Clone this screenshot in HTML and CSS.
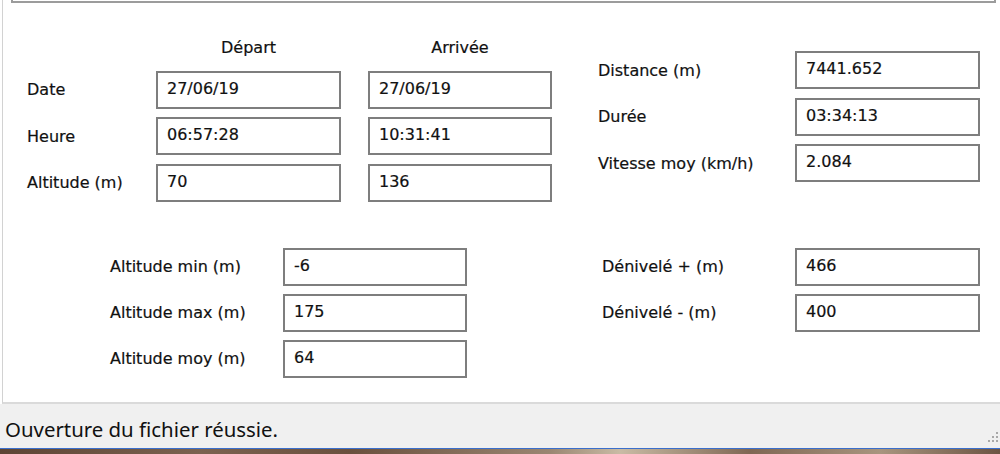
FILE: index.html
```
<!DOCTYPE html>
<html>
<head>
<title>Statistiques du parcours</title>
<meta charset="UTF-8" />
<link rel="stylesheet" href="styles.css">
</head>
<body>
<div class="window">
	<div class="panel">
		<div class="frame-top"></div>
		<div class="upper">
			<div class="times">
				<span></span>
				<h2>Départ</h2>
				<h2>Arrivée</h2>
				<label>Date</label>
				<div class="field">27/06/19</div>
				<div class="field">27/06/19</div>
				<label>Heure</label>
				<div class="field">06:57:28</div>
				<div class="field">10:31:41</div>
				<label>Altitude (m)</label>
				<div class="field">70</div>
				<div class="field">136</div>
			</div>
			<div class="totals">
				<label>Distance (m)</label>
				<div class="field">7441.652</div>
				<label>Durée</label>
				<div class="field">03:34:13</div>
				<label>Vitesse moy (km/h)</label>
				<div class="field">2.084</div>
			</div>
		</div>
		<div class="lower">
			<div class="altis">
				<label>Altitude min (m)</label>
				<div class="field">-6</div>
				<label>Altitude max (m)</label>
				<div class="field">175</div>
				<label>Altitude moy (m)</label>
				<div class="field">64</div>
			</div>
			<div class="climbs">
				<label>Dénivelé + (m)</label>
				<div class="field">466</div>
				<label>Dénivelé - (m)</label>
				<div class="field">400</div>
			</div>
		</div>
	</div>
	<div class="status">
		<span>Ouverture du fichier réussie.</span>
		<svg class="grip" width="12" height="12" viewBox="0 0 12 12">
			<rect x="9" y="1" width="2" height="2" fill="#a8a8a8"/>
			<rect x="5" y="5" width="2" height="2" fill="#a8a8a8"/>
			<rect x="9" y="5" width="2" height="2" fill="#a8a8a8"/>
			<rect x="1" y="9" width="2" height="2" fill="#a8a8a8"/>
			<rect x="5" y="9" width="2" height="2" fill="#a8a8a8"/>
			<rect x="9" y="9" width="2" height="2" fill="#a8a8a8"/>
		</svg>
	</div>
	<div class="desktop"></div>
</div>
</body>
</html>
```
FILE: styles.css
```
body{
	margin: 0 ;
	padding: 0 ;
	overflow: hidden ;
	background: #6e5846 ;
}
.window{
	width: 1000px ;
	height: 454px ;
	background: #fff ;
	font-family: "DejaVu Sans", Verdana, sans-serif ;
	font-size: 16px ;
	color: #111 ;
	-webkit-text-stroke: 0.2px ;
}
.panel{
	height: 402px ;
	margin-left: 2px ;
	border-left: 1px solid #d2d2d2 ;
	border-bottom: 2px solid #dadada ;
	background: #fff ;
}
.frame-top{
	height: 1px ;
	margin: 0 4px 0 8px ;
	border: 2px solid #9c9c9c ;
	border-top: none ;
}
.upper, .lower{
	display: flex ;
	align-items: flex-start ;
}
.times{
	display: grid ;
	grid-template-columns: 102px 185px 184px ;
	grid-template-rows: 34px 38px 38px 38px ;
	column-gap: 27px ;
	row-gap: 8.5px ;
	margin: 25px 0 0 24px ;
}
.times h2{
	margin: 0 ;
	padding-top: 4px ;
	font-size: 16px ;
	font-weight: normal ;
	text-align: center ;
	align-self: center ;
}
.totals{
	display: grid ;
	grid-template-columns: 197px 185px ;
	grid-auto-rows: 38px ;
	row-gap: 8.5px ;
	margin: 48px 0 0 46px ;
}
.lower{
	margin-top: 46px ;
}
.altis{
	display: grid ;
	grid-template-columns: 173px 184px ;
	grid-auto-rows: 38px ;
	row-gap: 8px ;
	margin-left: 107px ;
}
.climbs{
	display: grid ;
	grid-template-columns: 193px 185px ;
	grid-auto-rows: 38px ;
	row-gap: 8px ;
	margin-left: 135px ;
}
label{
	align-self: center ;
}
.field{
	box-sizing: border-box ;
	height: 38px ;
	padding: 6px 9px 0 ;
	border: 2px solid #7e7e7e ;
	background: #fff ;
	color: #111 ;
}
.status{
	position: relative ;
	box-sizing: border-box ;
	height: 45px ;
	padding: 11px 0 0 5px ;
	background: #f0f0f0 ;
	border-bottom: 1px solid #3b6fcc ;
	font-family: "Noto Sans", "Open Sans", sans-serif ;
	font-size: 20.4px ;
	color: #111 ;
	-webkit-text-stroke: 0 ;
}
.grip{
	position: absolute ;
	right: 1px ;
	bottom: 5px ;
}
.desktop{
	height: 6px ;
	background: linear-gradient(90deg, #5d4535 0%, #7b6250 20%, #6a503e 35%, #9a8672 55%, #c9bba5 62%, #7f6754 75%, #a8957f 88%, #6b5443 100%) ;
}
```
